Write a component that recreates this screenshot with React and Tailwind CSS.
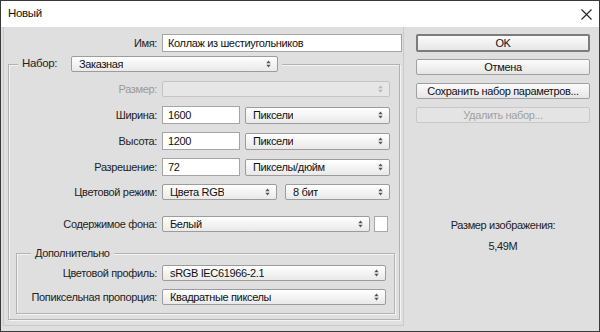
import React from 'react';

const Arrows = ({ dim }) => (
  <svg width="5" height="8" viewBox="0 0 5 8" className="shrink-0">
    <path d="M0.3 3.2 L2.5 0.6 L4.7 3.2 Z M0.3 4.8 L2.5 7.4 L4.7 4.8 Z" fill={dim ? '#b4b4b4' : '#555'} />
  </svg>
);

function Select({ value, w, h = 'h-[16px]', disabled, extra = '' }) {
  return (
    <div
      className={`${w} ${h} ${extra} shrink-0 flex items-center justify-between pl-[7px] pr-[6px] rounded-[2px] border ${
        disabled
          ? 'border-[#c4c4c4] bg-[#e6e6e6] text-[#999]'
          : 'border-[#9c9c9c] bg-gradient-to-b from-[#ffffff] to-[#e9e9e9] text-[#111]'
      }`}
    >
      <span className="truncate">{value}</span>
      <Arrows dim={disabled} />
    </div>
  );
}

function Input({ value, w }) {
  return (
    <div className={`${w} h-[18px] shrink-0 flex items-center px-[5px] bg-white border border-[#a5a5a5] text-[#111]`}>
      {value}
    </div>
  );
}

function Row({ label, labelW, mt, disabled, children }) {
  return (
    <div className={`flex items-center gap-[5px] ${mt}`}>
      <div className={`${labelW} shrink-0 text-right ${disabled ? 'text-[#9a9a9a]' : 'text-[#222]'}`}>{label}</div>
      {children}
    </div>
  );
}

function Button({ children, mt, primary, disabled }) {
  return (
    <div
      className={`w-[174px] flex items-center justify-center rounded-[2px] ${mt} ${
        primary
          ? 'h-[18px] border-2 border-[#7c7c7c] bg-gradient-to-b from-[#fbfbfb] to-[#e6e6e6] text-[#111]'
          : disabled
          ? 'h-[16px] border border-[#c8c8c8] bg-[#e4e4e4] text-[#a0a0a0]'
          : 'h-[16px] border border-[#a0a0a0] bg-gradient-to-b from-[#fbfbfb] to-[#e6e6e6] text-[#111]'
      }`}
    >
      {children}
    </div>
  );
}

export default function App() {
  return (
    <div className="w-[600px] h-[332px] overflow-hidden border border-[#3a3a3a] bg-[#dfdfdf] flex flex-col font-['Liberation_Sans',Arial,sans-serif] text-[11px] tracking-[-0.35px] leading-none">
      {/* title bar */}
      <div className="h-[26px] shrink-0 bg-white flex items-center justify-between pl-[7px] pr-[7px]">
        <span className="text-[11.5px] text-[#111]">Новый</span>
        <svg width="11" height="11" viewBox="0 0 11 11">
          <path d="M0.5 0.5 L10.5 10.5 M10.5 0.5 L0.5 10.5" stroke="#222" strokeWidth="1.1" />
        </svg>
      </div>

      <div className="flex flex-1">
        {/* left panel */}
        <div className="ml-[2px] mb-[5px] w-[401px] border-l border-r border-b border-[#cacaca] flex flex-col">
          <Row label="Имя:" labelW="w-[153px]" mt="mt-[7px]">
            <Input value="Коллаж из шестиугольников" w="w-[240px]" />
          </Row>

          {/* Набор group */}
          <div className="ml-[4px] mt-[12px] w-[392px] flex-1 mb-[5px] border border-[#b2b2b2] shadow-[1px_1px_0_#f4f4f4,inset_1px_1px_0_#f4f4f4] flex flex-col">
            <div className="-mt-[9px] ml-[9px] self-start flex items-center gap-[6px] px-[4px] bg-[#dfdfdf]">
              <span className="w-[43px] text-[#222] text-[11.5px]">Набор:</span>
              <Select value="Заказная" w="w-[207px]" />
            </div>

            <Row label="Размер:" labelW="w-[148px]" mt="mt-[9px]" disabled>
              <Select value="" w="w-[228px]" disabled />
            </Row>
            <Row label="Ширина:" labelW="w-[148px]" mt="mt-[9px]">
              <Input value="1600" w="w-[78px]" />
              <Select value="Пиксели" w="w-[145px]" h="h-[17px]" />
            </Row>
            <Row label="Высота:" labelW="w-[148px]" mt="mt-[8px]">
              <Input value="1200" w="w-[78px]" />
              <Select value="Пиксели" w="w-[145px]" h="h-[17px]" />
            </Row>
            <Row label="Разрешение:" labelW="w-[148px]" mt="mt-[8px]">
              <Input value="72" w="w-[78px]" />
              <Select value="Пикселы/дюйм" w="w-[145px]" h="h-[17px]" />
            </Row>
            <Row label="Цветовой режим:" labelW="w-[148px]" mt="mt-[8px]">
              <Select value="Цвета RGB" w="w-[115px]" />
              <Select value="8 бит" w="w-[105px]" extra="ml-[3px]" />
            </Row>
            <Row label="Содержимое фона:" labelW="w-[148px]" mt="mt-[16px]">
              <Select value="Белый" w="w-[208px]" />
              <div className="ml-[-1px] w-[14px] h-[16px] bg-white border border-[#a8a8a8]" />
            </Row>

            {/* Дополнительно group */}
            <div className="ml-[7px] mt-[21px] w-[379px] flex-1 mb-[5px] border border-[#b2b2b2] shadow-[1px_1px_0_#f4f4f4,inset_1px_1px_0_#f4f4f4] flex flex-col">
              <div className="-mt-[6px] ml-[14px] self-start px-[4px] bg-[#dfdfdf] text-[#222]">Дополнительно</div>
              <Row label="Цветовой профиль:" labelW="w-[140px]" mt="mt-[6px]">
                <Select value="sRGB IEC61966-2.1" w="w-[224px]" />
              </Row>
              <Row label="Попиксельная пропорция:" labelW="w-[140px]" mt="mt-[8px]">
                <Select value="Квадратные пикселы" w="w-[224px]" />
              </Row>
            </div>
          </div>
        </div>

        {/* right column */}
        <div className="flex flex-col ml-[12px]">
          <Button mt="mt-[7px]" primary>OK</Button>
          <Button mt="mt-[7px]">Отмена</Button>
          <Button mt="mt-[8px]">Сохранить набор параметров...</Button>
          <Button mt="mt-[8px]" disabled>Удалить набор...</Button>
          <div className="mt-[97px] w-[174px] text-center text-[#222]">Размер изображения:</div>
          <div className="mt-[10px] w-[174px] text-center text-[#222]">5,49M</div>
        </div>
      </div>
    </div>
  );
}
